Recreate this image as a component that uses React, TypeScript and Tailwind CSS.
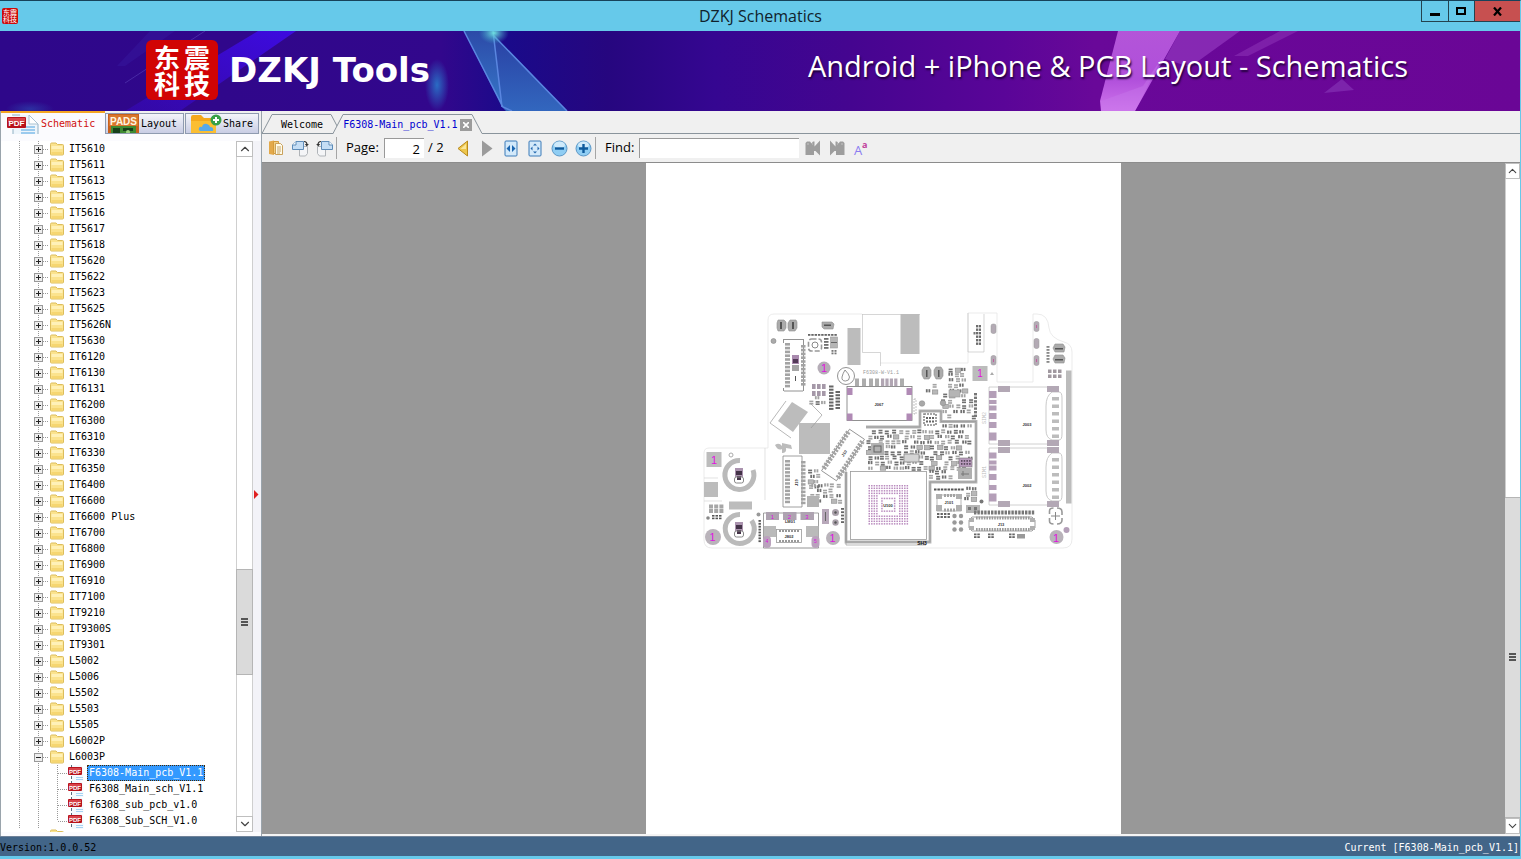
import { useState } from 'react';
import type { ReactNode } from 'react';
import { ChevronDown, ChevronUp } from 'lucide-react';

const FOLDERS = [
  'IT5610', 'IT5611', 'IT5613', 'IT5615', 'IT5616', 'IT5617', 'IT5618', 'IT5620', 'IT5622', 'IT5623',
  'IT5625', 'IT5626N', 'IT5630', 'IT6120', 'IT6130', 'IT6131', 'IT6200', 'IT6300', 'IT6310', 'IT6330',
  'IT6350', 'IT6400', 'IT6600', 'IT6600 Plus', 'IT6700', 'IT6800', 'IT6900', 'IT6910', 'IT7100', 'IT9210',
  'IT9300S', 'IT9301', 'L5002', 'L5006', 'L5502', 'L5503', 'L5505', 'L6002P', 'L6003P',
];
const FILES = ['F6308-Main_pcb_V1.1', 'F6308_Main_sch_V1.1', 'f6308_sub_pcb_v1.0', 'F6308_Sub_SCH_V1.0'];

/* ---------- icons ---------- */

function FolderIcon() {
  return (
    <svg width="15" height="14" viewBox="0 0 15 14" className="shrink-0">
      <path d="M.5 2.500q0-1.500 1-1.500h4.500l1.500 1.500h5q1 0 1 1v8.500q0 1-1 1h-11q-1 0-1-1z" fill="#fbe38e" stroke="#dcbd5c" />
      <path d="M1.500 4h11v3h-11z" fill="#fff1b8" />
      <path d="M1.500 10h11v2.500h-11z" fill="#f6d671" />
    </svg>
  );
}

function PdfIcon() {
  return (
    <svg width="16" height="16" viewBox="0 0 16 16" className="shrink-0">
      <path d="M3.500 0h9l3 3v13h-12z" fill="#f4f9fd" />
      <path d="M3.500 0v2M3.500 11v3" stroke="#5a6c7c" fill="none" />
      <path d="M8 12.500h7M8 14.500h7" stroke="#a5d2f2" />
      <rect x="0" y="2" width="14" height="8" rx="1" fill="#b8131c" />
      <rect x="1" y="3" width="12" height="3" fill="#d8434a" />
      <text x="7" y="8.500" fontSize="6" fontWeight="700" textAnchor="middle" fill="#fff" fontFamily="Liberation Sans, sans-serif">PDF</text>
    </svg>
  );
}

function PdfTabIcon() {
  return (
    <svg width="33" height="20" viewBox="0 0 33 20" className="shrink-0">
      <path d="M6 1h16l9 9v10h-25z" fill="#eef5fb" />
      <path d="M5 1l8 0M22 1l9 9v10M6 15v5" fill="none" stroke="#8fb0c4" />
      <path d="M22 1v9h9z" fill="#fff" stroke="#a9c2d2" />
      <path d="M16 13h12M14 16h14M14 19h14" stroke="#9ccbee" strokeWidth="2" />
      <rect x="0" y="3" width="19" height="11" rx="1" fill="#b8131c" />
      <rect x="1" y="4" width="17" height="4" fill="#d8434a" />
      <text x="9.500" y="12" fontSize="8" fontWeight="700" textAnchor="middle" fill="#fff" fontFamily="Liberation Sans, sans-serif">PDF</text>
    </svg>
  );
}

function PadsIcon() {
  return (
    <svg width="31" height="19" viewBox="0 0 31 19" className="shrink-0">
      <rect width="31" height="19" fill="#c8601c" />
      <rect x="1" y="1" width="29" height="11" fill="#d9772c" />
      <rect x="3" y="12" width="25" height="7" fill="#3f8a32" />
      <path d="M5 14h7v5H5zM15 14h10v3H15z" fill="#17401a" />
      <circle cx="20" cy="18" r="2" fill="#9ad07e" />
      <text x="15.500" y="11" fontSize="10" fontWeight="700" textAnchor="middle" fill="#fff5e0" fontFamily="Liberation Sans, sans-serif">PADS</text>
    </svg>
  );
}

function ShareIcon() {
  return (
    <svg width="32" height="19" viewBox="0 0 32 19" className="shrink-0">
      <path d="M1 3q0-2 2-2h8l3 3h10q2 0 2 2v13H1z" fill="#f5a81c" />
      <path d="M1 7h25v12H1z" fill="#fbbe32" />
      <path d="M10 17q-2-1-1-3 1-2 3-1 1-4 5-3 3 1 3 3 4 0 3 4z" fill="#58a9ea" />
      <circle cx="26" cy="6" r="5.500" fill="#38a047" />
      <path d="M26 3v6M23 6h6" stroke="#fff" strokeWidth="2" />
    </svg>
  );
}

function CopyIcon() {
  return (
    <svg width="16" height="16" viewBox="0 0 16 16">
      <path d="M1 1.500l5-1v14.500l-5-1z" fill="#e3a94a" />
      <path d="M5.500 1.500h5v12h-5z" fill="#f3cf83" stroke="#d59b3a" />
      <path d="M7.500 3.500h5l2 2v9h-7z" fill="#fffbe9" stroke="#c9a15a" />
      <path d="M9 7h4M9 9h4M9 11h4M9 13h3" stroke="#c4a56c" />
    </svg>
  );
}

function RotateIcon({ flip = false }: { flip?: boolean }) {
  return (
    <svg width="17" height="17" viewBox="0 0 17 17" className={flip ? '-scale-x-100' : ''}>
      <path d="M7.500 6.500h8v7l-2 2.500h-6z" fill="#f4f5f7" stroke="#b0b4b8" />
      <path d="M4 1.500h7.500v8h-11v-4.500z" fill="#c5def5" stroke="#5e8cb8" />
      <path d="M4 1.500v3.500h-3.500" fill="#fff" stroke="#5e8cb8" />
      <path d="M12 1.500q3 0 3 3.500" fill="none" stroke="#333" strokeWidth="1.200" />
      <path d="M12.800 4h4l-2 2.600z" fill="#333" />
    </svg>
  );
}

function ArrowIcon({ dir }: { dir: 'left' | 'right' }) {
  if (dir === 'right') {
    return <svg width="12" height="17" viewBox="0 0 12 17"><path d="M1 .5L11.500 8.500L1 16.500z" fill="#9b9b9b" /></svg>;
  }
  return (
    <svg width="12" height="17" viewBox="0 0 12 17">
      <path d="M10.500 1v15L1 8.500z" fill="#edc64c" stroke="#b98a1c" />
      <path d="M9 4v5H3.500z" fill="#fae79c" />
    </svg>
  );
}

function FitIcon({ page = false }: { page?: boolean }) {
  return (
    <svg width="14" height="17" viewBox="0 0 14 17">
      <rect x="1" y="1" width="12" height="15" rx="1" fill="#d3e9fa" stroke="#3b7ab8" />
      {page
        ? <path d="M7 3.500l2 2H5zM7 13.500l-2-2h4zM2.500 8.500l2-2v4zM11.500 8.500l-2-2v4z" fill="#2468ad" />
        : <path d="M6 5v7L2.500 8.500zM8 5v7l3.500-3.500z" fill="#1c66b0" />}
    </svg>
  );
}

function ZoomIcon({ plus = false }: { plus?: boolean }) {
  return (
    <svg width="17" height="17" viewBox="0 0 17 17">
      <circle cx="8.500" cy="8.500" r="7.500" fill="#8fcdf3" stroke="#5c97c6" />
      <ellipse cx="8.500" cy="5" rx="5.500" ry="3.500" fill="#cfeafb" />
      <path d={plus ? 'M4 8.500h9M8.500 4v9' : 'M4 8.500h9'} stroke="#0d5a9c" strokeWidth="2.400" />
    </svg>
  );
}

function FindStepIcon({ flip = false }: { flip?: boolean }) {
  return (
    <svg width="16" height="16" viewBox="0 0 16 16" className={flip ? '-scale-x-100' : ''}>
      <path d="M.5 3l1.500-1.500h3l1.500 2 1.500-2h1.500v5L15 .5v15L10.500 11H9v4H.5z" fill="#9d9d9d" />
      <path d="M2 4h2M7 4h1" stroke="#c4c4c4" />
    </svg>
  );
}

function CaseIcon() {
  return (
    <svg width="16" height="22" viewBox="0 0 16 22">
      <text x="1" y="18" fontSize="13" fill="#8b7cf0" fontFamily="Open Sans, sans-serif">A</text>
      <text x="9" y="11" fontSize="9" fontWeight="700" fill="#c0409c" fontFamily="Open Sans, sans-serif">a</text>
    </svg>
  );
}

/* ---------- banner ---------- */

function BannerArt() {
  return (
    <svg className="absolute inset-0 h-full w-full" viewBox="0 0 1520 80" preserveAspectRatio="none" aria-hidden>
      <defs>
        <linearGradient id="base" x1="0" x2="1" y1="0" y2="0">
          <stop offset="0" stopColor="#2e078a" />
          <stop offset=".29" stopColor="#32078c" />
          <stop offset=".335" stopColor="#1a0a8a" />
          <stop offset=".4" stopColor="#26067f" />
          <stop offset=".47" stopColor="#350691" />
          <stop offset=".56" stopColor="#450590" />
          <stop offset=".66" stopColor="#5a0598" />
          <stop offset=".72" stopColor="#690899" />
          <stop offset="1" stopColor="#6a0696" />
        </linearGradient>
        <linearGradient id="beam" x1="1" x2="0" y1="0" y2="1">
          <stop offset="0" stopColor="#3d0be0" />
          <stop offset="1" stopColor="#3d0be0" stopOpacity=".3" />
        </linearGradient>
        <linearGradient id="shard" x1="0" x2="0" y1="0" y2="1">
          <stop offset="0" stopColor="#2c4aa8" />
          <stop offset="1" stopColor="#3677c8" />
        </linearGradient>
        <linearGradient id="pink" x1="0" x2="0" y1="0" y2="1">
          <stop offset="0" stopColor="#b355d8" />
          <stop offset=".6" stopColor="#b04fdb" />
          <stop offset="1" stopColor="#cf74ec" />
        </linearGradient>
        <radialGradient id="glow">
          <stop offset="0" stopColor="#2a6cc4" />
          <stop offset="1" stopColor="#2a6cc4" stopOpacity="0" />
        </radialGradient>
        <radialGradient id="spark">
          <stop offset="0" stopColor="#6fe0e0" />
          <stop offset="1" stopColor="#3aa0c8" stopOpacity="0" />
        </radialGradient>
      </defs>
      <rect width="1520" height="80" fill="url(#base)" />
      <path d="M258 0h38L180 80h-55z" fill="url(#beam)" />
      <path d="M150 0h25L125 35h-8z" fill="#3a1fa5" opacity=".35" />
      <path d="M205 0L125 52" stroke="#5a41b8" opacity=".6" />
      <ellipse cx="437" cy="54" rx="12" ry="26" fill="url(#glow)" />
      <ellipse cx="30" cy="78" rx="24" ry="8" fill="url(#glow)" opacity=".4" />
      <path d="M464 0h29l9 76z" fill="url(#shard)" />
      <path d="M493 3l74 77h-61l-5-5z" fill="url(#shard)" opacity=".85" />
      <path d="M464 0l39 76 9 4M493 0l9 76M493 4l74 76" stroke="#5a86e0" strokeWidth="1.500" fill="none" />
      <ellipse cx="494" cy="2" rx="15" ry="11" fill="url(#spark)" />
      <path d="M1118 0h62l-45 80h-34l-1-10z" fill="url(#pink)" />
      <path d="M1180 0h60l-50 36-25-8z" fill="#9a3fc4" opacity=".6" />
      <path d="M1280 0h18l-50 25h-14z" fill="#8a30b4" opacity=".6" />
      <path d="M1101 70l42-15 20-30-28 55h-34z" fill="#c77aea" opacity=".4" />
      <path d="M1324 62l18-14 12 11z" fill="#8430b4" opacity=".7" />
    </svg>
  );
}

/* ---------- board drawing ---------- */

type GridProps = { x: number; y: number; cols: number; rows: number; dx: number; dy: number; w: number; h: number; fill?: string };

function Grid({ x, y, cols, rows, dx, dy, w, h, fill = '#a3a3a3' }: GridProps) {
  const pads: ReactNode[] = [];
  for (let r = 0; r < rows; r++) {
    for (let c = 0; c < cols; c++) {
      pads.push(<rect key={`${r}-${c}`} x={x + c * dx} y={y + r * dy} width={w} height={h} />);
    }
  }
  return <g fill={fill}>{pads}</g>;
}

// small two-pad parts, scattered with a fixed sequence so the board is always the same
function Parts({ x, y, w, h, seed, fill = 0.75 }: { x: number; y: number; w: number; h: number; seed: number; fill?: number }) {
  let s = seed * 7919;
  const next = () => { s = (s * 1103515245 + 12345) % 2147483648; return s / 2147483648; };
  const out: ReactNode[] = [];
  for (let py = y; py < y + h - 3; py += 5.200) {
    for (let px = x + next() * 3; px < x + w - 3; px += 5 + next() * 2.500) {
      if (next() > fill) continue;
      const cy = py + next() * 1.400 - 0.700;
      const kind = next();
      if (kind > 0.88) {
        out.push(<rect key={`${px}-${py}`} x={px} y={cy} width="5.500" height="4.200" fill="#b8b8b8" stroke="#8c8c8c" strokeWidth=".6" />);
        continue;
      }
      const color = kind > 0.4 ? '#707070' : '#a3a3a3';
      const upright = next() > 0.5;
      out.push(
        <g key={`${px}-${py}`} fill={color}>
          <rect x={px} y={cy} width={upright ? 4 : 1.800} height={upright ? 1.600 : 3.200} />
          <rect x={upright ? px : px + 2.600} y={upright ? cy + 2.300 : cy} width={upright ? 4 : 1.800} height={upright ? 1.600 : 3.200} />
        </g>
      );
    }
  }
  return <g>{out}</g>;
}

function Mark({ x, y, size = 11, children = '1' }: { x: number; y: number; size?: number; children?: ReactNode }) {
  return (
    <text x={x} y={y} fontSize={size} textAnchor="middle" dominantBaseline="central" fill="#e010e0" fontFamily="Liberation Sans, sans-serif">
      {children}
    </text>
  );
}

function Label({ x, y, children }: { x: number; y: number; children: ReactNode }) {
  return (
    <text x={x} y={y} fontSize="4" fontWeight="700" textAnchor="middle" dominantBaseline="central" fill="#333" fontFamily="Liberation Sans, sans-serif">
      {children}
    </text>
  );
}

function Bga() {
  const dots: ReactNode[] = [];
  for (let r = 0; r < 16; r++) {
    for (let c = 0; c < 16; c++) {
      const ring = Math.min(r, c, 15 - r, 15 - c);
      if (ring === 4 || ring > 5) continue;
      dots.push(<rect key={`${r}-${c}`} x={868.500 + c * 2.540} y={485 + r * 2.540} width="1.500" height="1.500" />);
    }
  }
  return <g fill="#b98bbe">{dots}</g>;
}

function SimSlot({ y, label, pads }: { y: number; label: string; pads: [number, number][] }) {
  return (
    <g>
      <path d={`M989 ${y}H1059M989 ${y}V${y + 57}H1059`} fill="none" stroke="#c4c4c4" strokeWidth=".8" />
      <path d={`M1059 ${y + 5}h-7q-6 4-6 14v24q0 8 6 10h7q3 0 3-6v-36q0-6-3-6z`} fill="none" stroke="#bbb" strokeWidth=".8" />
      {pads.map(([py, h]) => <rect key={py} x="989" y={py} width="7.500" height={h} fill="#b49fb8" />)}
      <g fill="#b3a8b5">
        <rect x="998" y={y - 1} width="12" height="6" />
        <rect x="1047" y={y - 1} width="12" height="6" />
      </g>
      <Grid x={1052} y={y + 10} cols={1} rows={6} dx={1} dy={7.500} w={7} h={3.500} fill="#bcbcbc" />
      <Label x={1027} y={y + 37}>{label}</Label>
    </g>
  );
}

function Board() {
  return (
    <svg viewBox="646 163 475 671" className="block h-auto w-full" role="img" aria-label="F6308 main board, page 2">
      {/* board edge */}
      <path d="M862 314H774q-6 0-6 6V448H709q-5 0-5 5V540q0 8 8 8H1063q9 0 9-9V352q0-8-8-10q-14-4-15-14q-1-14-12-14h-4V382H997V313H968V363H880" fill="none" stroke="#e6e6e6" strokeWidth=".8" />
      <path d="M862.500 314V352.500H880.500V366M862 314.500H920M968 313V352H984V314" fill="none" stroke="#c4c4c4" strokeWidth=".7" />
      <path d="M704 478H718M704 501H722M765 448V500" stroke="#d5d5d5" strokeWidth=".7" fill="none" />

      {/* plain copper */}
      <g fill="#bcbcbc">
        <rect x="847.500" y="328" width="13" height="37" />
        <rect x="900.500" y="314" width="19" height="40" />
        <rect x="799" y="423" width="31" height="31" />
        <path d="M792 402l16 10-15 20-15-11z" />
        <rect x="1066" y="370.500" width="5.500" height="133" />
        <rect x="704" y="482" width="14" height="15" />
        <rect x="729" y="501.500" width="23" height="8" />
        <rect x="706.500" y="452" width="15" height="15" />
        <rect x="972.500" y="366" width="15" height="15" />
        <path d="M775 445q4-3 7 1v-3l9 2 1 4-6-1q1 5-4 5v-4q-4 2-7-4z" />
      </g>
      <path d="M786 401l-16 22 21 15M810 403l12 12-11 13" fill="none" stroke="#999" strokeWidth=".7" />

      {/* shield traces */}
      <path d="M866 427H920V411H941V421.500H976V482H930V542H846V472" fill="none" stroke="#b4b4b4" strokeWidth="2.800" />
      <path d="M866 427H920V411H941V421.500H976V482H930V542H846V472" fill="none" stroke="#8d8d8d" strokeWidth=".5" />

      {/* top left */}
      <g fill="#ababab" stroke="#8e8e8e" strokeWidth=".6">
        <path d="M778 320h6l2 2v6l-2 3h-6l-1-3v-5z" />
        <path d="M790 320h6l1 2v6l-2 3h-6l-1-3v-5z" />
        <path d="M822 322h10l2 2-1 5h-9l-2-2z" />
        <path d="M924 367h5l2 3v6l-2 3h-5l-2-4v-5z" />
        <path d="M936 367h5l2 3v6l-2 3h-5l-2-4v-5z" />
        <path d="M1055 344h8l2 3-1 5h-9l-2-4z" />
        <path d="M1055 355h8l2 3-1 5h-9l-2-4z" />
      </g>
      <g fill="#555">
        <rect x="780" y="322" width="2" height="7" /><rect x="792" y="322" width="2" height="7" />
        <rect x="824" y="324.500" width="7" height="1.500" /><rect x="926" y="370" width="1.500" height="7" />
        <rect x="938" y="370" width="1.500" height="7" /><rect x="1055" y="348" width="8" height="1.500" />
        <rect x="1055" y="359" width="8" height="1.500" />
      </g>
      <circle cx="773.500" cy="341" r="2.500" fill="#aaa" stroke="#888" strokeWidth=".6" />
      <path d="M784 339.500H803M784 391H803M783.500 339V343M783.500 388V391M803.500 339V391" fill="none" stroke="#777" strokeWidth=".8" />
      <Grid x={785} y={343} cols={1} rows={12} dx={1} dy={3.800} w={5} h={2.600} />
      <Grid x={801} y={345} cols={1} rows={11} dx={1} dy={3.800} w={4.500} h={2.600} />
      <rect x="792" y="355" width="7" height="9" fill="#a98aae" />
      <path d="M793 359h5v4h-5z" fill="#533a58" />
      <rect x="792" y="365" width="7" height="6" fill="#a5a5a5" />
      <path d="M795.500 376v5" stroke="#555" />
      <rect x="808.500" y="339" width="13" height="12" rx="3" fill="none" stroke="#999" strokeWidth="1.600" strokeDasharray="5 2" />
      <circle cx="815" cy="345" r="3" fill="none" stroke="#888" />
      <Grid x={808} y={334} cols={9} rows={1} dx={3.300} dy={3} w={2.400} h={1.800} fill="#666" />
      <Grid x={824} y={338} cols={1} rows={4} dx={1} dy={3} w={4.500} h={1.800} fill="#6f6f6f" />
      <rect x="830.500" y="337" width="7" height="11" fill="#b5b5b5" stroke="#999" strokeWidth=".6" />
      <path d="M831 342.500h6" stroke="#666" />
      <Grid x={831.500} y={350} cols={2} rows={2} dx={3} dy={2.500} w={2} h={1.800} fill="#777" />
      <Grid x={829} y={385.500} cols={1} rows={8} dx={1} dy={3.200} w={4.500} h={2} fill="#666" />
      <Grid x={835.500} y={391} cols={1} rows={6} dx={1} dy={3.200} w={4.500} h={2} fill="#666" />
      <Grid x={812} y={384} cols={3} rows={2} dx={5} dy={7} w={3.600} h={5} fill="#a598a8" />
      <Parts x={808} y={396} w={20} h={9} seed={19} fill={0.7} />
      <circle cx="824" cy="368" r="6.500" fill="#b5adb7" />
      <Mark x={824} y={368}>1</Mark>
      <circle cx="846" cy="376" r="8.500" fill="none" stroke="#777" strokeWidth=".8" />
      <path d="M845 370q4 4 4.500 7q0 4-4 4t-3.500-4q1-4 3-7z" fill="none" stroke="#777" strokeWidth=".8" />
      <text x="863" y="374" fontSize="5" fill="#999" fontFamily="Liberation Mono, monospace">F6308-W-V1.1</text>
      <Grid x={855} y={378.500} cols={2} rows={1} dx={7} dy={1} w={4} h={7.500} fill="#adadad" />
      <Grid x={869} y={378.500} cols={2} rows={1} dx={6} dy={1} w={4} h={7.500} fill="#adadad" />
      <Grid x={881} y={378.500} cols={4} rows={1} dx={4.400} dy={1} w={3.200} h={7.500} fill="#b1a6b3" />
      <rect x="900" y="378.500" width="4" height="7.500" fill="#adadad" />
      <rect x="847" y="386.500" width="65" height="34" fill="none" stroke="#777" strokeWidth=".8" />
      <g fill="#b08ab5">
        <rect x="847" y="388" width="5.500" height="7" /><rect x="906.500" y="388" width="5.500" height="7" />
        <rect x="847" y="413.500" width="5.500" height="7" /><rect x="906.500" y="413.500" width="5.500" height="7" />
      </g>
      <Label x={879} y={404}>J067</Label>

      {/* top right */}
      <Grid x={976} y={325} cols={2} rows={6} dx={2.800} dy={3.500} w={2.200} h={2.400} fill="#6d6d6d" />
      <rect x="973.500" y="332" width="2" height="2.500" fill="#777" />
      <g fill="#b3aab4" stroke="#999" strokeWidth=".5">
        <rect x="991" y="324" width="5" height="9.500" rx="2" /><rect x="991" y="355.500" width="5" height="9.500" rx="2" />
        <rect x="1034" y="321.500" width="5" height="10" rx="2" /><rect x="1034" y="338.500" width="5" height="10" rx="2" />
        <rect x="1034" y="355.500" width="5" height="10" rx="2" />
      </g>
      <g stroke="#c060a0">
        <path d="M1036.500 325v3M1036.500 359v3M993.500 359v3" />
      </g>
      <Grid x={1046.500} y={346} cols={1} rows={6} dx={1} dy={3} w={3} h={1.800} fill="#888" />
      <Grid x={1048} y={369.500} cols={3} rows={2} dx={5} dy={5} w={3.500} h={3.500} fill="#a0989f" />
      <Mark x={980} y={373.500} size={10}>1</Mark>
      <path d="M990 375l2-3 2 3z" fill="#aaa" />
      <Parts x={946} y={368} w={20} h={19} seed={3} fill={0.95} />
      <Parts x={925} y={384} w={16} h={14} seed={8} fill={0.85} />
      <Parts x={941} y={389} w={34} h={31} seed={27} fill={0.68} />
      <rect x="949" y="390" width="11" height="7" fill="#b5b5b5" stroke="#999" strokeWidth=".6" />
      <Grid x={974} y={393} cols={1} rows={7} dx={1} dy={3.600} w={3} h={2.400} fill="#777" />
      <circle cx="922" cy="403.500" r="2.800" fill="#a8a8a8" stroke="#888" strokeWidth=".5" />
      <circle cx="943" cy="403" r="2.800" fill="#a8a8a8" stroke="#888" strokeWidth=".5" />
      <rect x="914" y="399" width="2" height="15" fill="none" stroke="#999" strokeWidth=".6" strokeDasharray="2 1" />
      <rect x="924" y="414" width="12" height="11" fill="none" stroke="#888" strokeWidth="1.600" strokeDasharray="2 1" />
      <Grid x={926} y={417} cols={3} rows={2} dx={3} dy={3.500} w={2} h={2} fill="#666" />

      <SimSlot y={387} label="J003" pads={[[391, 7], [400, 4], [405.500, 5], [413, 6], [422, 6], [432.500, 8]]} />
      <SimSlot y={448} label="J002" pads={[[452.500, 6], [460.500, 4], [465.500, 5], [474, 6], [485, 5], [493.500, 8]]} />
      <g fill="#b3a8b5">
        <rect x="998" y="440" width="12" height="6" /><rect x="1047" y="440" width="12" height="6" />
        <rect x="998" y="501" width="12" height="6" /><rect x="1047" y="501" width="12" height="6" />
      </g>
      <text x="986" y="478" fontSize="5" fill="#bbb" transform="rotate(-90 986 478)" fontFamily="Liberation Mono, monospace">SIM1</text>
      <text x="986" y="424" fontSize="5" fill="#bbb" transform="rotate(-90 986 424)" fontFamily="Liberation Mono, monospace">SIM2</text>

      {/* middle */}
      <g transform="rotate(-56 843 455)">
        <rect x="818" y="446" width="50" height="18" fill="none" stroke="#888" strokeWidth=".8" />
        <Grid x={821} y={444} cols={13} rows={1} dx={3.500} dy={1} w={2.200} h={5} />
        <Grid x={821} y={461} cols={13} rows={1} dx={3.500} dy={1} w={2.200} h={5} />
        <Label x={845} y={455}>J10</Label>
      </g>
      <Parts x={866} y={430} w={107} h={40} seed={42} fill={0.9} />
      <Parts x={928} y={470} w={30} h={11} seed={77} fill={0.85} />
      <Parts x={942} y={424} w={31} h={7} seed={21} fill={0.85} />
      <rect x="871" y="443" width="13" height="12" fill="#b2b2b2" />
      <rect x="874" y="446" width="7" height="6" fill="none" stroke="#666" />
      <rect x="904" y="454" width="15" height="8" fill="#d4d4d4" stroke="#888" strokeWidth=".8" />
      <rect x="959" y="458" width="13" height="9" fill="#b99bbd" stroke="#777" strokeWidth=".6" />
      <Grid x={961} y={460} cols={4} rows={2} dx={2.700} dy={3} w={1.500} h={1.800} fill="#5a4a5e" />
      <rect x="958" y="468" width="14" height="11" fill="#b0b0b0" />
      <path d="M961 474h8M963 471v5" stroke="#777" />

      <rect x="850.500" y="471.500" width="76" height="68" fill="#fff" stroke="#999" strokeWidth=".8" />
      <path d="M846 470V545H926" fill="none" stroke="#999" strokeWidth=".7" />
      <Bga />
      <Label x={888} y={505.500}>U100</Label>
      <text x="922" y="542.500" fontSize="5" fontWeight="700" textAnchor="middle" dominantBaseline="central" fill="#111" fontFamily="Liberation Sans, sans-serif">SH3</text>

      {/* left */}
      <Mark x={714} y={460}>1</Mark>
      <circle cx="731" cy="455" r="2" fill="none" stroke="#aaa" />
      <path d="M740 460.500A14.500 14.500 0 1 0 753 470" fill="none" stroke="#bababa" strokeWidth="5" />
      <path d="M740 514.500A14.500 14.500 0 1 0 751.500 520.500" fill="none" stroke="#bababa" strokeWidth="5" />
      {[476, 530].map(cy => (
        <g key={cy}>
          <rect x="735" y={cy - 8} width="8" height="9" fill="#aa92ae" />
          <path d={`M736 ${cy - 5}h6v4h-6zM737 ${cy}h4v4h-4z`} fill="#443348" />
          <rect x="734.500" y={cy + 1} width="9" height="6" rx="2" fill="none" stroke="#888" />
        </g>
      ))}
      <Grid x={709} y={504.500} cols={3} rows={2} dx={5.200} dy={4.500} w={4} h={4} fill="#a6a6a6" />
      <Grid x={712} y={515} cols={3} rows={2} dx={3.500} dy={2.600} w={2.500} h={1.600} fill="#555" />
      <circle cx="708" cy="518" r="1.800" fill="#888" />
      <circle cx="713" cy="537" r="8" fill="#b9b3ba" />
      <Mark x={712.500} y={537}>1</Mark>
      <path d="M783 456H802V507H783z" fill="none" stroke="#888" strokeWidth=".8" />
      <Grid x={785} y={460} cols={1} rows={12} dx={1} dy={3.700} w={5} h={2.500} />
      <Grid x={801} y={461} cols={1} rows={12} dx={1} dy={3.700} w={4.500} h={2.500} />
      <text x="798" y="486" fontSize="4" fontWeight="700" fill="#333" transform="rotate(-90 798 486)" fontFamily="Liberation Sans, sans-serif">J19</text>
      <Parts x={808} y={469} w={14} h={22} seed={31} fill={0.95} />
      <Parts x={809} y={484} w={36} h={22} seed={13} fill={0.88} />
      <rect x="807" y="496" width="12" height="11" fill="#b3b3b3" />
      <rect x="822" y="509" width="7" height="15" fill="#b8a8ba" />
      <path d="M825.500 512v9" stroke="#666" />
      <circle cx="835.500" cy="512.500" r="3.500" fill="#aaa1ab" /><circle cx="835.500" cy="522.500" r="3.200" fill="#aaa1ab" />
      <circle cx="835.500" cy="512.500" r="1.200" fill="#555" /><circle cx="835.500" cy="522.500" r="1.200" fill="#555" />
      <Grid x={841} y={508} cols={1} rows={5} dx={1} dy={3.300} w={3} h={1.800} fill="#666" />
      <Grid x={758.500} y={520} cols={1} rows={8} dx={1} dy={2.900} w={2.400} h={1.800} fill="#555" />
      <circle cx="758.500" cy="514.500" r="2" fill="#999" />

      {/* usb */}
      <path d="M763.500 513V548H818.500V513z" fill="none" stroke="#888" strokeWidth=".8" />
      <g fill="#aea3b1">
        <rect x="766" y="512" width="13" height="8" /><rect x="783" y="512" width="13.500" height="8" /><rect x="800.500" y="512" width="13.500" height="8" />
      </g>
      <Mark x={772.500} y={516.500} size={6}>1</Mark>
      <Mark x={789.500} y={516.500} size={6}>2</Mark>
      <Mark x={807} y={516.500} size={6}>3</Mark>
      <Label x={790} y={521.500}>LM01</Label>
      <rect x="764" y="526" width="12" height="11" fill="#bababa" /><rect x="806" y="526" width="12.500" height="11" fill="#bababa" />
      <rect x="763" y="536" width="8" height="12" rx="4" fill="#baa2bd" /><rect x="811.500" y="536" width="8" height="12" rx="4" fill="#baa2bd" />
      <Mark x={767} y={541} size={5}>4</Mark>
      <Mark x={815.500} y={541} size={5}>5</Mark>
      <rect x="776.500" y="529.500" width="25" height="13" fill="#fff" stroke="#999" strokeWidth=".8" />
      <Grid x={779} y={530} cols={7} rows={2} dx={3} dy={10} w={2} h={2} fill="#999" />
      <Label x={789} y={536}>J802</Label>
      <circle cx="833" cy="538" r="7" fill="#b9b3ba" />
      <Mark x={832.500} y={538}>1</Mark>

      {/* bottom right */}
      <Grid x={934} y={488.500} cols={9} rows={1} dx={3.400} dy={1} w={2.500} h={2} fill="#555" />
      <Parts x={964} y={487} w={14} h={16} seed={6} fill={0.95} />
      <rect x="937" y="495" width="24" height="16" fill="none" stroke="#999" strokeWidth=".7" />
      <g fill="#b0b0b0">
        <rect x="936" y="494" width="6" height="5" /><rect x="956" y="494" width="6" height="5" />
        <rect x="936" y="505" width="6" height="6" /><rect x="956" y="505" width="6" height="6" />
      </g>
      <Grid x={944} y={494} cols={4} rows={2} dx={3} dy={14.500} w={2} h={3} />
      <Label x={949} y={502.500}>J101</Label>
      <Grid x={937} y={513} cols={4} rows={2} dx={3.500} dy={3} w={2.400} h={2} fill="#666" />
      {[516, 522.500, 529.500].map(cy => (
        <g key={cy} fill="#999">
          <circle cx="954.500" cy={cy} r="2.200" /><circle cx="961" cy={cy} r="2.200" />
        </g>
      ))}
      <circle cx="981.500" cy="501.500" r="2" fill="#777" />
      <rect x="966" y="505" width="14" height="8" fill="#b5b5b5" />
      <path d="M968 507h3v3h-3zM974 507h3v3h-3z" fill="#777" />
      <Grid x={974} y={510.500} cols={18} rows={1} dx={3.400} dy={1} w={2.400} h={4} fill="#777" />
      <path d="M972 517H1032l3 3v8l-3 3H972l-3-3v-8z" fill="none" stroke="#888" strokeWidth=".8" />
      <Grid x={976} y={516.500} cols={21} rows={2} dx={2.600} dy={11.500} w={1.600} h={3} fill="#999" />
      <g fill="#b0b0b0">
        <rect x="969" y="518" width="5" height="4" /><rect x="969" y="526" width="5" height="4" />
        <rect x="1030" y="518" width="5" height="4" /><rect x="1030" y="526" width="5" height="4" />
      </g>
      <Label x={1001} y={524}>J13</Label>
      <Grid x={974} y={533.500} cols={2} rows={2} dx={3.300} dy={2.700} w={2.500} h={1.800} fill="#666" />
      <Grid x={988} y={533.500} cols={2} rows={2} dx={3.300} dy={2.700} w={2.500} h={1.800} fill="#666" />
      <Grid x={1009} y={533.500} cols={2} rows={2} dx={3.300} dy={2.700} w={2.500} h={1.800} fill="#666" />
      <rect x="1017" y="534" width="8" height="4.500" fill="#999" />
      <g fill="none" stroke="#999" strokeWidth="1.600">
        <path d="M1049.500 514v-3q0-3 4-3M1057 508q5 0 5 4v3M1049.500 518v3q0 3 4 3M1057 524q5 0 5-4v-2" />
        <path d="M1051 516h9M1055.500 512v8" stroke="#888" strokeWidth="1" />
      </g>
      <circle cx="1056.500" cy="537" r="7" fill="#b9b3ba" />
      <Mark x={1056} y={537.500}>1</Mark>
      <circle cx="1066.500" cy="530" r="3" fill="#b49fb8" />
    </svg>
  );
}

/* ---------- window parts ---------- */

function ScrollBar({ children }: { children: ReactNode }) {
  const button = 'flex h-4 w-full shrink-0 items-center justify-center border border-[#bfbfbf] bg-white text-[#444]';
  return (
    <>
      <button aria-label="Scroll up" className={button}><ChevronUp size={14} /></button>
      <div className="flex min-h-0 flex-1 flex-col">{children}</div>
      <button aria-label="Scroll down" className={button}><ChevronDown size={14} /></button>
    </>
  );
}

function Grip() {
  return <svg width="7" height="8" viewBox="0 0 7 8"><path d="M0 1h7M0 4h7M0 7h7" stroke="#555" strokeWidth="2" /></svg>;
}

function FolderRow({ name, open }: { name: string; open: boolean }) {
  return (
    <button className="flex h-4 w-full items-center" aria-expanded={open}>
      <svg width="49" height="16" viewBox="1 0 49 16" className="shrink-0">
        <path d="M19.500 0v16M38.500 0v16M43 8.500h6" stroke="#999" strokeDasharray="1 1" />
        <rect x="34.500" y="4.500" width="8" height="8" fill="#eee" stroke="#999" />
        <path d={open ? 'M36 8.500h5' : 'M36 8.500h5M38.500 6v5'} stroke="#222" />
      </svg>
      <FolderIcon />
      <span className="pl-1 leading-4 whitespace-pre">{name}</span>
    </button>
  );
}

function FileRow({ name, last, selected, onSelect }: { name: string; last: boolean; selected: boolean; onSelect: () => void }) {
  return (
    <button className="flex h-4 w-full items-center" onClick={onSelect}>
      <svg width="67" height="16" viewBox="1 0 67 16" className="shrink-0">
        <path d={`M19.500 0v16M38.500 0v16M57.500 0v${last ? 8 : 16}M58 8.500h10`} stroke="#999" strokeDasharray="1 1" />
      </svg>
      <PdfIcon />
      <span className={`ml-[3px] h-4 px-[2px] leading-4 ${selected ? 'bg-[#3399ff] text-white outline-1 -outline-offset-1 outline-dotted outline-[#4a2a00]' : ''}`}>
        {name}
      </span>
    </button>
  );
}

function Slant({ right = false, base = false }: { right?: boolean; base?: boolean }) {
  return (
    <svg width="10" height="20" viewBox="0 0 10 20" className="shrink-0">
      <path d={right ? 'M0 0l10 20H0z' : 'M10 0L0 20h10z'} fill="#f0f0f0" />
      <path d={right ? 'M0 .5l10 19' : 'M10 .5L0 19.500'} stroke="#8a949c" fill="none" />
      {base && <path d="M0 19.500h10" stroke="#8a949c" />}
    </svg>
  );
}

function ToolButton({ label, children }: { label: string; children: ReactNode }) {
  return <button aria-label={label} className="flex h-6 w-6 shrink-0 items-center justify-center">{children}</button>;
}

export default function App() {
  const [selected, setSelected] = useState(FILES[0]);
  const [page, setPage] = useState('2');
  const [find, setFind] = useState('');

  return (
    <div className="flex h-screen flex-col overflow-hidden border-t border-r border-b-3 border-t-[#17425a] border-r-[#66c9ea] border-b-[#66c9ea] bg-[#f0f0f0] text-[10px] text-black font-['DejaVu_Sans_Mono',monospace]">
      {/* title bar */}
      <header className="flex h-[30px] shrink-0 bg-[#66c9ea]">
        <div className="flex w-25 shrink-0 items-center pl-[2px]">
          <div className="grid h-4 w-4 grid-cols-2 place-items-center rounded-xs bg-[#cc0a0a] p-px text-[7px] leading-[7px] text-white font-['Noto_Sans_CJK_SC',sans-serif]">
            <span>东</span><span>震</span><span>科</span><span>技</span>
          </div>
        </div>
        <h1 className="flex-1 text-center text-[16px] leading-[30px] text-[#10222c] font-['Open_Sans',sans-serif]">DZKJ Schematics</h1>
        <div className="flex h-[21px] w-[99px] shrink-0 border-b border-l border-[#24424f]">
          <button aria-label="Minimize" className="flex flex-1 items-center justify-center border-r border-[#24424f]">
            <svg width="10" height="10" viewBox="0 0 10 10"><path d="M0 7h10v3H0z" /></svg>
          </button>
          <button aria-label="Maximize" className="flex flex-1 items-center justify-center border-r border-[#24424f]">
            <svg width="10" height="8" viewBox="0 0 10 8"><path d="M1 1h8v6H1z" fill="none" stroke="#000" strokeWidth="2" /></svg>
          </button>
          <button aria-label="Close" className="flex w-[45px] items-center justify-center bg-[#c75050]">
            <svg width="9" height="9" viewBox="0 0 9 9"><path d="M1 .5l7 8M8 .5l-7 8" stroke="#000" strokeWidth="2.200" /></svg>
          </button>
        </div>
      </header>

      {/* banner */}
      <div className="relative h-20 shrink-0 overflow-hidden">
        <BannerArt />
        <div className="relative flex h-full items-center pr-28 pb-[2px] pl-[146px] text-white">
          <div className="grid h-[60px] w-[72px] shrink-0 grid-cols-2 place-content-center place-items-center rounded-md bg-[#d10404] px-[6px] text-[26px] leading-[26px] font-bold font-['Noto_Sans_CJK_SC',sans-serif]">
            <span>东</span><span>震</span><span>科</span><span>技</span>
          </div>
          <p className="ml-[11px] flex-1 pb-px text-[34px] leading-10 font-bold whitespace-nowrap font-['DejaVu_Sans',sans-serif]">DZKJ Tools</p>
          <p className="pb-2 text-[29px] leading-10 whitespace-nowrap text-shadow-[1px_2px_2px_#20003a] font-['Open_Sans',sans-serif]">
            Android + iPhone &amp; PCB Layout - Schematics
          </p>
        </div>
      </div>

      <div className="flex min-h-0 flex-1">
        {/* library panel */}
        <aside className="flex w-[261px] shrink-0 flex-col border-l border-[#9aa4ac] bg-[#fbfbfe]">
          <nav className="flex h-[23px] shrink-0 bg-[#f0f0f0]">
            <button className="flex w-[104px] items-center gap-px border-t-2 border-[#f5a623] bg-[#fbfbfe] pl-[6px] text-[#d01010]">
              <PdfTabIcon />Schematic
            </button>
            <button className="mt-[2px] flex w-[79px] items-center gap-[2px] border border-[#8f9bb0] bg-linear-to-b from-[#f4f5fa] to-[#c9cde4] pl-[2px]">
              <PadsIcon />Layout
            </button>
            <button className="mt-[2px] ml-px flex w-[74px] items-center gap-px border border-[#8f9bb0] bg-linear-to-b from-[#f4f5fa] to-[#c9cde4] pl-1">
              <ShareIcon />Share
            </button>
          </nav>
          <div className="flex min-h-0 flex-1 pt-[7px] pb-1">
            <div className="min-w-0 flex-1 overflow-hidden bg-white">
              {FOLDERS.map(name => <FolderRow key={name} name={name} open={name === 'L6003P'} />)}
              {FILES.map((name, i) => (
                <FileRow key={name} name={name} last={i === FILES.length - 1} selected={name === selected} onSelect={() => setSelected(name)} />
              ))}
              <div className="pl-[49px]"><FolderIcon /></div>
            </div>
            <div className="flex w-[17px] shrink-0 flex-col bg-white">
              <ScrollBar>
                <div className="grow-[412] basis-0 border-x border-[#cfcfcf]" />
                <div className="flex grow-[104] basis-0 items-center justify-center border border-[#b5b5b5] bg-[#dadada]"><Grip /></div>
                <div className="grow-[141] basis-0 border-x border-[#cfcfcf]" />
              </ScrollBar>
            </div>
            <div className="flex w-2 shrink-0 items-center bg-[#f3f3f8] pt-4">
              <svg width="6" height="9" viewBox="0 0 6 9"><path d="M1 0l4.500 4.500L1 9z" fill="#e02020" /></svg>
            </div>
          </div>
        </aside>

        {/* document area */}
        <main className="flex min-w-0 flex-1 flex-col border-l border-[#9aa4ac] bg-[#f0f0f0]">
          <nav className="flex h-[23px] shrink-0 items-end">
            <Slant base />
            <button className="h-5 border-y border-[#8a949c] px-2 pl-[9px] leading-[19px]">Welcome</button>
            <div className="-mr-2 flex"><Slant right base /></div>
            <Slant />
            <div className="flex h-5 items-center gap-[2px] border-t border-[#8a949c]">
              <button className="leading-[19px] text-[#0000d0]">F6308-Main_pcb_V1.1</button>
              <button aria-label="Close tab" className="flex h-3 w-3 items-center justify-center bg-[#9c9c9c]">
                <svg width="6" height="6" viewBox="0 0 6 6"><path d="M0 0l6 6M6 0L0 6" stroke="#fff" strokeWidth="1.600" /></svg>
              </button>
            </div>
            <Slant right />
            <div className="h-5 flex-1 border-b border-[#8a949c]" />
          </nav>

          <div className="flex h-7 shrink-0 items-center pl-[2px] text-[13px] font-['Open_Sans',sans-serif]">
            <ToolButton label="Copy"><CopyIcon /></ToolButton>
            <ToolButton label="Rotate right"><RotateIcon /></ToolButton>
            <ToolButton label="Rotate left"><RotateIcon flip /></ToolButton>
            <div className="mr-[9px] h-[22px] border-l border-[#a5a5a5]" />
            <label htmlFor="page" className="w-[38px]">Page:</label>
            <input id="page" value={page} onChange={e => setPage(e.target.value)} className="h-5 w-10 border-t border-l border-[#999] bg-white pr-1 text-right outline-none" />
            <span className="w-[27px] pl-1">/ 2</span>
            <ToolButton label="Previous page"><ArrowIcon dir="left" /></ToolButton>
            <ToolButton label="Next page"><ArrowIcon dir="right" /></ToolButton>
            <ToolButton label="Fit width"><FitIcon /></ToolButton>
            <ToolButton label="Fit page"><FitIcon page /></ToolButton>
            <ToolButton label="Zoom out"><ZoomIcon /></ToolButton>
            <ToolButton label="Zoom in"><ZoomIcon plus /></ToolButton>
            <div className="mr-[9px] h-[22px] border-l border-[#a5a5a5]" />
            <label htmlFor="find" className="w-[34px]">Find:</label>
            <input id="find" value={find} onChange={e => setFind(e.target.value)} className="mr-[2px] h-5 w-40 border-t border-l border-[#999] bg-white px-1 outline-none" />
            <ToolButton label="Find previous"><FindStepIcon /></ToolButton>
            <ToolButton label="Find next"><FindStepIcon flip /></ToolButton>
            <ToolButton label="Match case"><CaseIcon /></ToolButton>
          </div>

          <div className="flex min-h-0 flex-1 border-t border-[#8c8c8c]">
            <div className="flex min-w-0 flex-1 justify-center overflow-hidden bg-[#989898]">
              <div className="aspect-[475/671] h-full bg-white"><Board /></div>
            </div>
            <div className="flex w-[15px] shrink-0 flex-col bg-white">
              <ScrollBar>
                <div className="grow-[320] basis-0 border-l border-[#cfcfcf]" />
                <div className="flex grow-[322] basis-0 items-center justify-center border-y border-[#b5b5b5] bg-[#dcdcdc]"><Grip /></div>
              </ScrollBar>
            </div>
          </div>
          <div className="h-[2px] shrink-0 bg-[#f4f4f4]" />
        </main>
      </div>

      <footer className="flex h-5 shrink-0 items-end justify-between border-t border-[#6f8299] bg-[#426588] pr-px">
        <span className="leading-4 text-black">Version:1.0.0.52</span>
        <span className="leading-4 text-white">Current [{selected}]</span>
      </footer>
    </div>
  );
}
